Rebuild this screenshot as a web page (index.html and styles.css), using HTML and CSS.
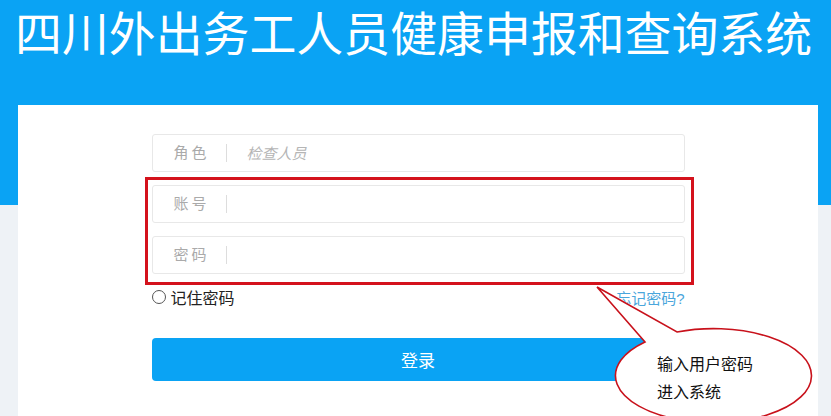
FILE: index.html
```html
<!DOCTYPE html>
<html lang="zh-CN">
<head>
  <meta charset="UTF-8" />
  <meta name="viewport" content="width=device-width, initial-scale=1.0"/>
  <title>四川外出务工人员健康申报和查询系统</title>
  <link rel="stylesheet" href="styles.css">
</head>
<body>
  <h1 class="title">四川外出务工人员健康申报和查询系统</h1>

  <div class="card">
    <form class="login">
      <label class="field">
        <span class="field-name">角色</span>
        <input type="text" placeholder="检查人员" class="italic" readonly />
      </label>
      <label class="field">
        <span class="field-name">账号</span>
        <input type="text" />
      </label>
      <label class="field">
        <span class="field-name">密码</span>
        <input type="password" />
      </label>

      <div class="extra">
        <label class="remember"><span class="radio"></span>记住密码</label>
        <a href="#" class="forgot">忘记密码?</a>
      </div>

      <button type="button" class="submit">登录</button>
    </form>
  </div>

  <!-- annotation drawn over the screenshot -->
  <div class="mark-box"></div>
  <svg class="callout" width="241" height="136" viewBox="0 0 241 136">
    <path d="M 7 7 L 87 52 A 98 47 0 1 1 55 62 Z" fill="#fff" stroke="#c8111b" stroke-width="1.6" />
  </svg>
  <div class="callout-text">输入用户密码<br>进入系统</div>
</body>
</html>
```

FILE: styles.css
```css
body {
  margin: 0;
  font-family: "Liberation Sans", "Noto Sans CJK SC", sans-serif;
  background: linear-gradient(#0aa3f4 0, #0aa3f4 205px, #eef2f6 205px);
  min-height: 416px;
  overflow: hidden;
}

.title {
  margin: 0;
  height: 105px;
  padding: 7px 0 0 15px;
  box-sizing: border-box;
  font-size: 46.9px;
  line-height: 56px;
  font-weight: normal;
  color: #fff;
  white-space: nowrap;
}

.card {
  background: #fff;
  margin: 0 13px 0 18px;
  height: 311px;
  padding-top: 29px;
  box-sizing: border-box;
}

.login {
  width: 533px;
  margin: 0 auto;
}

.field {
  display: flex;
  align-items: center;
  height: 38px;
  border: 1px solid #e8e8e8;
  border-radius: 3px;
  box-sizing: border-box;
  margin-bottom: 13px;
}

.field-name {
  width: 74px;
  padding-left: 21px;
  box-sizing: border-box;
  font-size: 15px;
  letter-spacing: 3px;
  color: #aaa;
  border-right: 1px solid #ddd;
  line-height: 18px;
}

.field input {
  flex: 1;
  border: none;
  outline: none;
  padding: 0 20px;
  font-size: 15px;
  font-family: inherit;
  background: transparent;
}

.field input::placeholder {
  color: #b5b5b5;
}

.italic {
  font-style: italic;
}

.extra {
  display: flex;
  justify-content: space-between;
  align-items: center;
  margin-top: 4px;
  height: 20px;
}

.remember {
  display: flex;
  align-items: center;
  font-size: 16px;
  color: #222;
}

.radio {
  width: 12px;
  height: 12px;
  border: 1px solid #555;
  border-radius: 50%;
  margin-right: 5px;
}

.forgot {
  font-size: 15px;
  color: #4aa6dc;
  text-decoration: none;
}

.submit {
  display: block;
  width: 100%;
  height: 43px;
  margin-top: 31px;
  border: none;
  border-radius: 4px;
  background: #0aa3f4;
  color: #fff;
  font-size: 17px;
  font-family: inherit;
}

.mark-box {
  position: absolute;
  left: 145px;
  top: 177px;
  width: 543px;
  height: 102px;
  border: 3px solid #d4121c;
}

.callout {
  position: absolute;
  left: 590px;
  top: 280px;
}

.callout-text {
  position: absolute;
  left: 657px;
  top: 351px;
  font-family: "Liberation Serif", "Noto Sans CJK SC", serif;
  font-size: 16px;
  line-height: 28px;
  color: #111;
}
```
